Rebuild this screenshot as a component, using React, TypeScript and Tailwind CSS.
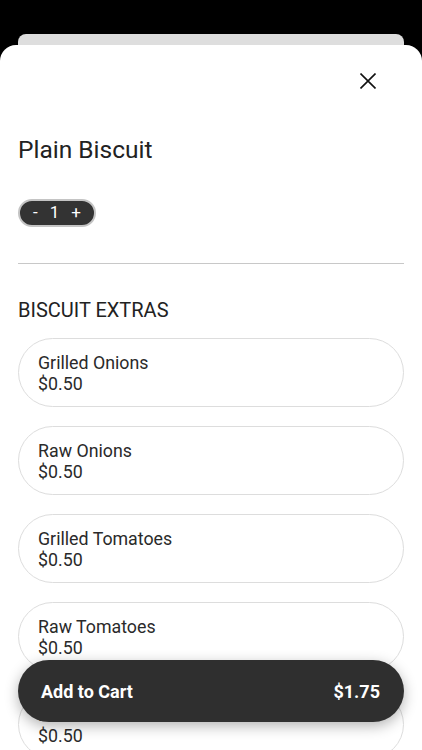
const extras = [
  { name: "Grilled Onions", price: "$0.50" },
  { name: "Raw Onions", price: "$0.50" },
  { name: "Grilled Tomatoes", price: "$0.50" },
  { name: "Raw Tomatoes", price: "$0.50" },
  { name: "Mushrooms", price: "$0.50" },
]

export default function App() {
  return (
    <div className="relative h-[750px] w-[422px] overflow-hidden bg-black pt-[34px] font-['Roboto',sans-serif] text-[#222]">
      {/* stacked card behind */}
      <div className="mx-[18px] h-[11px] rounded-t-lg bg-[#dedede]" />

      {/* sheet */}
      <div className="h-full rounded-t-2xl bg-white px-[18px]">
        <div className="flex justify-end pt-[28px] pr-[28px]">
          <button className="flex h-4 w-4 items-center justify-center text-[#111]">
            <svg width="16" height="16" viewBox="0 0 16 16" fill="none" stroke="currentColor" strokeWidth="1.6">
              <path d="M0.5 0.5 L15.5 15.5 M15.5 0.5 L0.5 15.5" />
            </svg>
          </button>
        </div>

        <h1 className="mt-[46px] text-[24.5px] leading-[30px]">Plain Biscuit</h1>

        <div className="mt-[34px] flex h-[28px] w-[78px] items-center justify-center gap-[12px] rounded-full border-2 border-[#c4c4c4] bg-[#333] text-[17px] text-white">
          <span>-</span>
          <span>1</span>
          <span>+</span>
        </div>

        <div className="mt-[36px] h-px bg-[#c8c8c8]" />

        <h2 className="mt-[34px] text-[20px] leading-[24px]">BISCUIT EXTRAS</h2>

        <div className="mt-[16px] flex flex-col gap-[19px]">
          {extras.map((e) => (
            <div
              key={e.name}
              className="flex h-[69px] flex-col justify-center rounded-full border border-[#dddddd] px-[19px] text-[17.8px] leading-[21px] text-[#2a2a2a]"
            >
              <span>{e.name}</span>
              <span>{e.price}</span>
            </div>
          ))}
        </div>
      </div>

      {/* floating add to cart */}
      <button className="absolute left-[18px] top-[660px] flex h-[62px] w-[386px] items-center justify-between rounded-full bg-[#2f2f2f] pl-[23px] pr-[24px] text-[18px] font-bold text-white shadow-[0_4px_14px_rgba(0,0,0,0.3)]">
        <span>Add to Cart</span>
        <span>$1.75</span>
      </button>
    </div>
  )
}
